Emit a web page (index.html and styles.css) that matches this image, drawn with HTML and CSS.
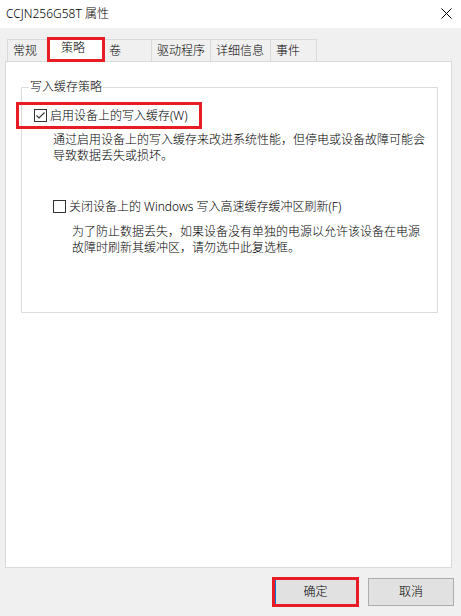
FILE: index.html
```html
<!DOCTYPE html>
<html lang="zh-CN">
<head>
<meta charset="utf-8">
<title>CCJN256G58T 属性</title>
<link rel="stylesheet" href="styles.css">
</head>
<body>
<div class="window">
  <header class="titlebar">
    <span class="title">CCJN256G58T 属性</span>
    <svg class="close" width="11" height="11" viewBox="0 0 11 11"><path d="M0.5 0.5 L10.5 10.5 M10.5 0.5 L0.5 10.5" stroke="#000" stroke-width="1" fill="none"/></svg>
  </header>
  <nav class="tabs">
    <div class="tab w-general">常规</div>
    <div class="tab selected">策略</div>
    <div class="tab w-volume">卷</div>
    <div class="tab w-driver">驱动程序</div>
    <div class="tab w-detail">详细信息</div>
    <div class="tab w-events last">事件</div>
  </nav>
  <section class="panel">
    <fieldset class="group">
      <legend class="group-label">写入缓存策略</legend>
      <div class="check-row highlight">
        <span class="box">
          <svg width="11" height="11" viewBox="0 0 11 11"><path d="M1.5 5.5 L4 8 L9.5 2.5" stroke="#333" stroke-width="1.1" fill="none"/></svg>
        </span>
        <span class="check-text">启用设备上的写入缓存(W)</span>
      </div>
      <p class="desc desc-first">通过启用设备上的写入缓存来改进系统性能，但停电或设备故障可能会<br>导致数据丢失或损坏。</p>
      <div class="check-row second">
        <span class="box"></span>
        <span class="check-text">关闭设备上的 Windows 写入高速缓存缓冲区刷新(F)</span>
      </div>
      <p class="desc desc-second">为了防止数据丢失，如果设备没有单独的电源以允许该设备在电源<br>故障时刷新其缓冲区，请勿选中此复选框。</p>
    </fieldset>
  </section>
  <footer class="buttons">
    <button class="btn primary">确定</button>
    <button class="btn">取消</button>
  </footer>
</div>
</body>
</html>
```
FILE: styles.css
```css
html, body {
  margin: 0;
  padding: 0;
}
body {
  width: 461px;
  height: 616px;
  overflow: hidden;
  background: #f0f0f0;
  font-family: "Noto Sans", "Noto Sans CJK SC", sans-serif;
  font-size: 12px;
  font-weight: 300;
  color: #000;
}
.window {
  display: flex;
  flex-direction: column;
}
.titlebar {
  height: 28px;
  background: #fff;
  display: flex;
  align-items: center;
  justify-content: space-between;
  padding: 0 9px 1px 6px;
  box-sizing: border-box;
}
.title {
  line-height: 16px;
}
.close {
  display: block;
}
.tabs {
  display: flex;
  align-items: flex-end;
  height: 23px;
  margin-top: 10px;
  padding-left: 7px;
  position: relative;
  z-index: 1;
}
.tab {
  height: 22px;
  box-sizing: border-box;
  border-top: 1px solid #d9d9d9;
  border-left: 1px solid #d9d9d9;
  padding-left: 5px;
  line-height: 21px;
  background: #f0f0f0;
  white-space: nowrap;
}
.tab.last {
  border-right: 1px solid #d9d9d9;
}
.w-general { width: 40px; }
.w-volume { width: 46px; border-left: none; padding-left: 4px; }
.w-driver { width: 59px; }
.w-detail { width: 60px; }
.w-events { width: 47px; }
.tab.selected {
  width: 58px;
  height: 25px;
  margin-bottom: -1px;
  border: 3px solid #e81c24;
  background: #fff;
  padding-left: 11px;
  line-height: 16px;
}
.panel {
  margin-left: 5px;
  width: 447px;
  height: 507px;
  box-sizing: border-box;
  border: 1px solid #d9d9d9;
  background: #fff;
  padding-top: 18px;
}
.group {
  margin: 0 0 0 15px;
  width: 417px;
  box-sizing: border-box;
  border: 1px solid #dcdcdc;
  padding: 0 0 56px 0;
  min-inline-size: 0;
}
.group-label {
  margin-left: 7px;
  padding: 0 1px;
  line-height: 14px;
}
.check-row {
  display: flex;
  align-items: center;
  gap: 3px;
  white-space: nowrap;
}
.check-row.highlight {
  margin: 8px 0 0 -6px;
  width: 186px;
  height: 27px;
  box-sizing: border-box;
  border: 3px solid #e81c24;
  padding-left: 15px;
}
.check-row.second {
  margin: 34px 0 0 31px;
  height: 17px;
}
.box {
  width: 13px;
  height: 13px;
  box-sizing: border-box;
  border: 1px solid #333;
  background: #fff;
  flex: none;
  display: flex;
}
.box svg {
  display: block;
}
.check-text {
  line-height: 16px;
}
.desc {
  margin: 0;
  line-height: 16px;
  white-space: nowrap;
}
.desc-first {
  margin: 3px 0 0 31px;
}
.desc-second {
  margin: 9px 0 0 50px;
}
.buttons {
  display: flex;
  justify-content: flex-end;
  align-items: center;
  gap: 9px;
  margin-top: 9px;
  padding-right: 7px;
}
.btn {
  width: 86px;
  height: 28px;
  box-sizing: border-box;
  border: 1px solid #adadad;
  background: #e1e1e1;
  font-family: "Noto Sans", "Noto Sans CJK SC", sans-serif;
  font-size: 12px;
  font-weight: 300;
  color: #000;
  padding: 0;
  line-height: 16px;
}
.btn.primary {
  width: 87px;
  height: 30px;
  border: 3px solid #e81c24;
  box-shadow: inset 1px 0 0 #0078d7;
}
```
